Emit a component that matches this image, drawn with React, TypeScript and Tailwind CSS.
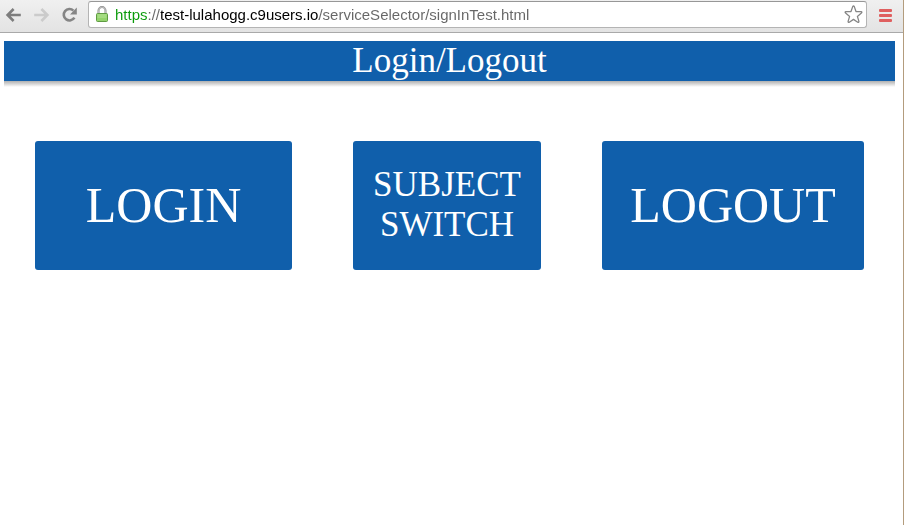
import { useState } from "react";

const navButton = "flex h-6 w-7 items-center justify-center";
const tile =
  "flex h-[129px] min-w-0 items-center justify-center rounded-[3px] bg-[#105fab] pb-0.5 text-center text-white";

function BrowserBar() {
  const [url, setUrl] = useState(
    "https://test-lulahogg.c9users.io/serviceSelector/signInTest.html"
  );

  return (
    <header className="flex h-[33px] items-start border-b border-[#a9a9a9] bg-linear-to-b from-[#f0f0f0] to-[#e3e3e3]">
      <nav className="flex w-[88px] pt-[3px]" aria-label="History">
        <button type="button" aria-label="Back" className={navButton}>
          <svg width="18" height="16" viewBox="0 0 18 16" fill="none" stroke="#7d7d7d" strokeWidth="2.6">
            <path d="M8.6 2 2.6 8l6 6M3 8h12.8" />
          </svg>
        </button>
        <button type="button" aria-label="Forward" className={navButton}>
          <svg width="18" height="16" viewBox="0 0 18 16" fill="none" stroke="#cbcbcb" strokeWidth="2.6">
            <path d="M8.4 2l6 6-6 6M14 8H1.2" />
          </svg>
        </button>
        <button type="button" aria-label="Reload" className={navButton}>
          <svg width="18" height="18" viewBox="0 0 18 18" fill="none">
            <path d="M13.4 11.6A5.7 5.7 0 1 1 12.4 4.6" stroke="#858585" strokeWidth="2.6" />
            <path d="M15.8 1.6v6.8H9z" fill="#858585" />
          </svg>
        </button>
      </nav>
      <div className="mt-px flex h-[27px] flex-1 items-center rounded-[3px] border border-[#b4b4b4] border-t-[#979797] bg-white pr-[3px] pl-[7px]">
        <svg width="12" height="17" viewBox="0 0 12 17" className="shrink-0">
          <path d="M2.5 8V4.6a3.5 3.5 0 0 1 7 0V8" fill="none" stroke="#8c8c8c" strokeWidth="2" />
          <path d="M2.5 8V4.6a3.5 3.5 0 0 1 7 0V8" fill="none" stroke="#d4d4d4" strokeWidth=".7" />
          <rect x=".5" y="7.5" width="11" height="8" rx="1" fill="#94d36c" stroke="#5f9b43" />
          <path d="M1.5 9h9M1.5 11h9" stroke="#b5e596" />
        </svg>
        <input
          type="text"
          aria-label="Address"
          value={url}
          onChange={(e) => setUrl(e.target.value)}
          spellCheck={false}
          className="ml-[7px] h-6 min-w-0 flex-1 bg-[linear-gradient(to_right,#0a9a0a_33px,#666_33px,#666_46px,#000_46px,#000_204px,#666_204px)] bg-clip-text font-['Liberation_Sans',Arial,sans-serif] text-[15px] leading-6 text-transparent caret-black outline-none"
        />
        <button type="button" aria-label="Bookmark this page" className="flex h-6 w-5 shrink-0 items-center justify-center">
          <svg width="19" height="19" viewBox="0 0 19 19" fill="#fff" stroke="#858585" strokeWidth="1.3" strokeLinejoin="round">
            <path d="M8.7 1.6Q9.5.4 10.3 1.6L12 6.5l5.1.2q1.4.3.3 1.4l-4 3.3 1.5 5q.1 1.4-1.2.8L9.5 14.4l-4.2 2.8q-1.3.6-1.2-.8l1.5-5-4-3.3Q.5 7 1.9 6.7L7 6.5z" />
          </svg>
        </button>
      </div>
      <button type="button" aria-label="Menu" className="mt-[3px] flex h-6 w-9 items-center justify-center">
        <svg width="13" height="13" viewBox="0 0 13 13" fill="#df5f5f">
          <rect width="13" height="3" rx="1" />
          <rect y="5" width="13" height="3" rx="1" />
          <rect y="10" width="13" height="3" rx="1" />
        </svg>
      </button>
    </header>
  );
}

export default function App() {
  return (
    <div className="flex min-h-screen flex-col border-r border-[#b39c7d] bg-white font-['Liberation_Serif','Times_New_Roman',serif]">
      <BrowserBar />
      <main className="flex-1 pt-2 pr-2 pl-1">
        <h1 className="bg-[#105fab] text-center text-[35px] leading-10 text-white">
          Login/Logout
        </h1>
        <div className="h-1.5 bg-linear-to-b from-[#b0b0b0] to-white" />
        <div className="mt-[54px] grid grid-cols-[257fr_188fr_262fr] gap-[61px] px-[31px]">
          <button type="button" className={`${tile} text-[50px] leading-[56px]`}>
            LOGIN
          </button>
          <button type="button" className={`${tile} px-4 text-[35px] leading-10`}>
            SUBJECT SWITCH
          </button>
          <button type="button" className={`${tile} text-[50px] leading-[56px]`}>
            LOGOUT
          </button>
        </div>
      </main>
    </div>
  );
}
